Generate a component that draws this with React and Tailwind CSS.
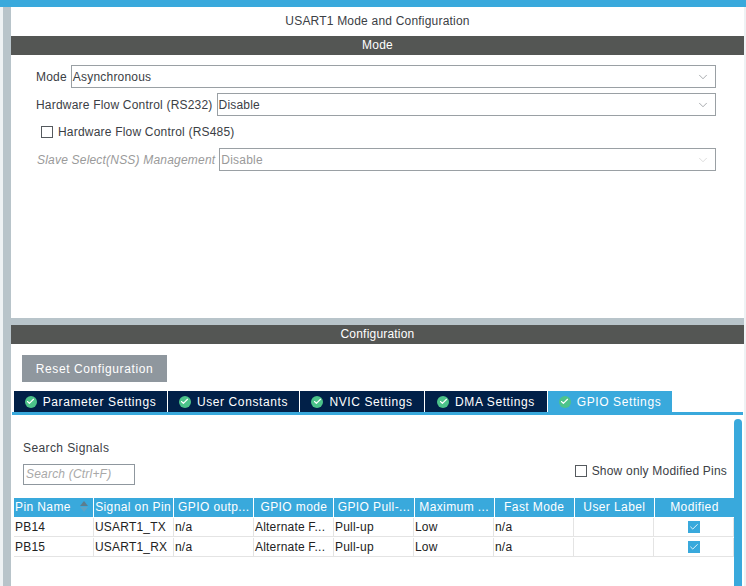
import React from "react";
import { ChevronDown, Check } from "lucide-react";

const tabs = [
  { label: "Parameter Settings", w: "w-[153px]" },
  { label: "User Constants", w: "w-[131px]" },
  { label: "NVIC Settings", w: "w-[124px]" },
  { label: "DMA Settings", w: "w-[122px]" },
  { label: "GPIO Settings", w: "w-[124px]", active: true },
];

const columns = [
  { label: "Pin Name", w: "w-[80px]", left: true, sort: true },
  { label: "Signal on Pin", w: "w-[80px]", left: true },
  { label: "GPIO outp...", w: "w-[80px]" },
  { label: "GPIO mode", w: "w-[80px]" },
  { label: "GPIO Pull-...", w: "w-[80px]" },
  { label: "Maximum ...", w: "w-[80px]" },
  { label: "Fast Mode", w: "w-[80px]" },
  { label: "User Label", w: "w-[80px]" },
  { label: "Modified", w: "w-[80px]" },
];

const rows = [
  ["PB14", "USART1_TX", "n/a", "Alternate F...", "Pull-up", "Low", "n/a", ""],
  ["PB15", "USART1_RX", "n/a", "Alternate F...", "Pull-up", "Low", "n/a", ""],
];

const SectionBar = ({ title }) => (
  <div className="h-[19px] bg-[#545654] text-white text-[12px] leading-[19px] text-center">
    {title}
  </div>
);

const SelectBox = ({ value, disabled, className = "" }) => (
  <div
    className={`h-[23px] border border-[#9aa0a4] flex items-center justify-between pl-[1px] pr-[5px] ${
      disabled ? "text-[#9a9a9a]" : "text-[#3b4045]"
    } ${className}`}
  >
    <span>{value}</span>
    <ChevronDown
      size={14}
      strokeWidth={1}
      className={disabled ? "text-[#c4c4c4]" : "text-[#6b7075]"}
    />
  </div>
);

const TabIcon = () => (
  <span className="w-[12px] h-[12px] rounded-full bg-[#4cc38a] flex items-center justify-center shrink-0">
    <Check size={9} strokeWidth={3} className="text-white" />
  </span>
);

export default function App() {
  return (
    <div
      className="w-[746px] h-[586px] overflow-hidden bg-white text-[12px] tracking-[0.2px] flex flex-col"
      style={{ fontFamily: '"Liberation Sans", Arial, sans-serif' }}
    >
      <div className="h-[7px] bg-[#39a9dc] shrink-0" />

      <div className="flex flex-1 min-h-0">
        <div className="w-[3px] bg-[#eef2f4] shrink-0" />
        <div className="w-[8px] bg-[#b8c4ca] shrink-0" />

        <div className="w-[733px] flex flex-col">
          {/* Mode panel */}
          <div className="h-[311px] shrink-0">
            <div className="h-[29px] text-[#3b4045] leading-[29px] text-center">
              USART1 Mode and Configuration
            </div>
            <SectionBar title="Mode" />
            <div className="pl-[25px] pr-[28px] pt-[10px]">
              <div className="flex items-center gap-[4px]">
                <span className="text-[#3b4045]">Mode</span>
                <SelectBox value="Asynchronous" className="flex-1" />
              </div>
              <div className="flex items-center gap-[4px] mt-[5px]">
                <span className="text-[#3b4045]">Hardware Flow Control (RS232)</span>
                <SelectBox value="Disable" className="flex-1" />
              </div>
              <div className="flex items-center gap-[5px] h-[23px] mt-[4px] pl-[5px]">
                <span className="w-[12px] h-[12px] border border-[#555a5e]" />
                <span className="text-[#3b4045]">Hardware Flow Control (RS485)</span>
              </div>
              <div className="flex items-center gap-[4px] mt-[5px]">
                <span className="italic text-[#9a9a9a] pl-[1px]">Slave Select(NSS) Management</span>
                <SelectBox value="Disable" disabled className="flex-1" />
              </div>
            </div>
          </div>

          <div className="h-[7px] bg-[#b8c4ca] shrink-0" />
          <SectionBar title="Configuration" />

          {/* Configuration panel */}
          <div className="relative flex-1 min-h-0">
            <button className="block mt-[11px] ml-[11px] w-[145px] h-[27px] bg-[#8f979e] text-white text-[12px] tracking-[0.6px]">
              Reset Configuration
            </button>

            <div className="flex mt-[9px] ml-[3px] gap-[1px] pl-0 h-[21px]">
              {tabs.map((t) => (
                <div
                  key={t.label}
                  className={`${t.w} flex items-center justify-center gap-[6px] text-white tracking-[0.6px] ${
                    t.active ? "bg-[#39a9dc]" : "bg-[#012048]"
                  }`}
                >
                  <TabIcon />
                  <span>{t.label}</span>
                </div>
              ))}
            </div>
            <div className="h-[3px] bg-[#39a9dc] ml-[1px] mr-[1px]" />

            <div className="px-[12px] pt-[24px] text-[#3b4045] tracking-[0.4px]">Search Signals</div>
            <div className="flex items-center justify-between ml-[12px] mr-[17px] mt-[7px] h-[21px]">
              <div className="w-[112px] h-[21px] border border-[#8f979e] pl-[2px] leading-[19px] italic text-[#a8a8a8]">
                Search (Ctrl+F)
              </div>
              <div className="flex items-center gap-[5px] -mt-[7px]">
                <span className="w-[12px] h-[12px] border border-[#555a5e]" />
                <span className="text-[#3b4045]">Show only Modified Pins</span>
              </div>
            </div>

            <div className="ml-[3px] mt-[13px] w-[720px]">
              <div className="flex h-[19px] gap-[1px] bg-white">
                {columns.map((c) => (
                  <div
                    key={c.label}
                    className={`${c.w} bg-[#39a9dc] text-white leading-[19px] truncate relative tracking-[0.4px] ${
                      c.left ? "pl-[1px]" : "text-center"
                    }`}
                  >
                    {c.label}
                    {c.sort && (
                      <span className="absolute right-[5px] top-[3px] flex flex-col gap-[1px]">
                        <span className="w-0 h-0 border-x-[4px] border-x-transparent border-b-[5px] border-b-[#5d7d8d]" />
                        <span className="w-0 h-0 border-x-[4px] border-x-transparent border-t-[5px] border-t-[#5fa3c4]" />
                      </span>
                    )}
                  </div>
                ))}
              </div>
              {rows.map((r) => (
                <div key={r[0]} className="flex h-[20px] border-b border-[#e4e4e4] pt-[1px]">
                  {r.map((v, i) => (
                    <div
                      key={i}
                      className="w-[80px] border-r border-[#e4e4e4] text-[#222] leading-[19px] truncate pl-[1px]"
                    >
                      {v}
                    </div>
                  ))}
                  <div className="w-[80px] border-r border-[#e4e4e4] flex items-center justify-center">
                    <span className="w-[12px] h-[12px] bg-[#39a9dc] flex items-center justify-center">
                      <Check size={10} strokeWidth={2} className="text-white" />
                    </span>
                  </div>
                </div>
              ))}
            </div>

            {/* scrollbar thumb */}
            <div className="absolute right-[2px] top-[75px] bottom-0 w-[8px] rounded-t-[4px] bg-[#39a9dc]" />
          </div>
        </div>

        <div className="w-[2px] bg-[#eef2f4] shrink-0" />
      </div>
    </div>
  );
}
